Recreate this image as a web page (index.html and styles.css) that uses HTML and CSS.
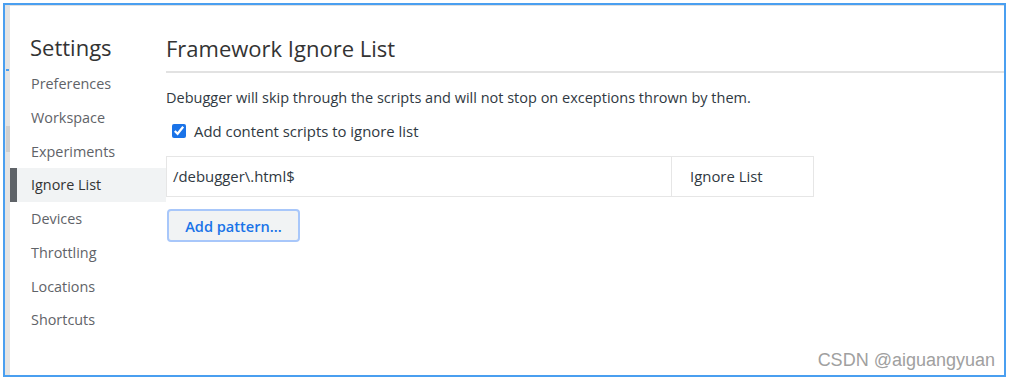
FILE: index.html
```html
<!DOCTYPE html>
<html lang="en">
<head>
    <meta charset="UTF-8">
    <title>Settings - Ignore List</title>
    <link rel="stylesheet" href="styles.css">
</head>
<body>
    <div class="frame">
        <div class="edge">
            <span class="edge-mark"></span>
            <span class="edge-thumb"></span>
        </div>

        <div class="sidebar">
            <h1>Settings</h1>
            <ul class="nav">
                <li>Preferences</li>
                <li>Workspace</li>
                <li>Experiments</li>
                <li class="active">Ignore List</li>
                <li>Devices</li>
                <li>Throttling</li>
                <li>Locations</li>
                <li>Shortcuts</li>
            </ul>
        </div>

        <div class="main">
            <h2>Framework Ignore List</h2>
            <p class="desc">Debugger will skip through the scripts and will not stop on exceptions thrown by them.</p>
            <label class="check">
                <input type="checkbox" checked>
                <span>Add content scripts to ignore list</span>
            </label>

            <div class="pattern-row">
                <div class="pattern">/debugger\.html$</div>
                <div class="behavior">Ignore List</div>
            </div>

            <button class="btn">Add pattern...</button>

            <div class="watermark">CSDN @aiguangyuan</div>
        </div>
    </div>
</body>
</html>
```

FILE: styles.css
```css
* {
    margin: 0;
    padding: 0;
    box-sizing: border-box;
}

body {
    font-family: "Open Sans", "Noto Sans", sans-serif;
    background: #fff;
    color: #303942;
    width: 1009px;
    height: 379px;
    overflow: hidden;
}

.frame {
    margin: 3px 3px 0 3px;
    height: 374px;
    border: 2px solid #4a9ff0;
    display: flex;
    background: #fff;
}

.edge {
    width: 5px;
    background: #e4e4e4;
    border-top: 1px solid #e0e0e0;
    position: relative;
}

.edge-mark {
    position: absolute;
    left: 1px;
    top: 63px;
    width: 3px;
    height: 2px;
    background: #4a9ff0;
}

.edge-thumb {
    position: absolute;
    left: 1px;
    top: 120px;
    width: 4px;
    height: 26px;
    background: #cfcfcf;
}

.sidebar {
    width: 156px;
    flex-shrink: 0;
    border-top: 1px solid #e0e0e0;
}

.sidebar h1 {
    font-size: 22px;
    font-weight: 400;
    color: #333;
    padding: 26px 0 0 20px;
    height: 61px;
    line-height: 30px;
}

.nav {
    list-style: none;
}

.nav li {
    height: 33.75px;
    line-height: 33.75px;
    font-size: 14.4px;
    color: #5f6368;
    border-left: 7px solid transparent;
    padding-left: 14px;
}

.nav li.active {
    background: #f1f3f4;
    border-left-color: #5f6368;
    color: #333;
}

.main {
    flex: 1;
    border-top: 1px solid #e0e0e0;
    position: relative;
    font-size: 14.9px;
}

.main h2 {
    font-size: 22px;
    font-weight: 400;
    color: #333;
    padding-top: 27px;
    line-height: 30px;
    height: 67px;
    padding-bottom: 8px;
    border-bottom: 2px solid #e2e2e2;
    margin-bottom: 15px;
}

.desc {
    font-size: 14.5px;
    line-height: 20px;
    color: #303942;
    margin-bottom: 13px;
}

.check {
    display: flex;
    align-items: center;
    gap: 8px;
    padding-left: 6px;
    color: #303942;
    height: 20px;
}

.check input {
    width: 14px;
    height: 14px;
    accent-color: #1a73e8;
    margin: 0;
}

.pattern-row {
    display: flex;
    width: 648px;
    height: 41px;
    border: 1px solid #e6e6e6;
    margin-top: 15px;
    color: #303942;
}

.pattern {
    width: 505px;
    border-right: 1px solid #e6e6e6;
    padding-left: 6px;
    line-height: 39px;
}

.behavior {
    flex: 1;
    padding-left: 18px;
    line-height: 39px;
}

.btn {
    margin-top: 12px;
    margin-left: 1px;
    width: 133px;
    height: 33px;
    border: 2px solid #a8c7fa;
    border-radius: 4px;
    background: #f1f3f4;
    color: #1a73e8;
    font-family: "Open Sans", "Noto Sans", sans-serif;
    font-size: 14.6px;
    font-weight: 600;
}

.watermark {
    position: absolute;
    right: 9px;
    bottom: 4px;
    font-family: "Liberation Sans", Arial, sans-serif;
    font-size: 18px;
    color: #a0a0a0;
}
```
